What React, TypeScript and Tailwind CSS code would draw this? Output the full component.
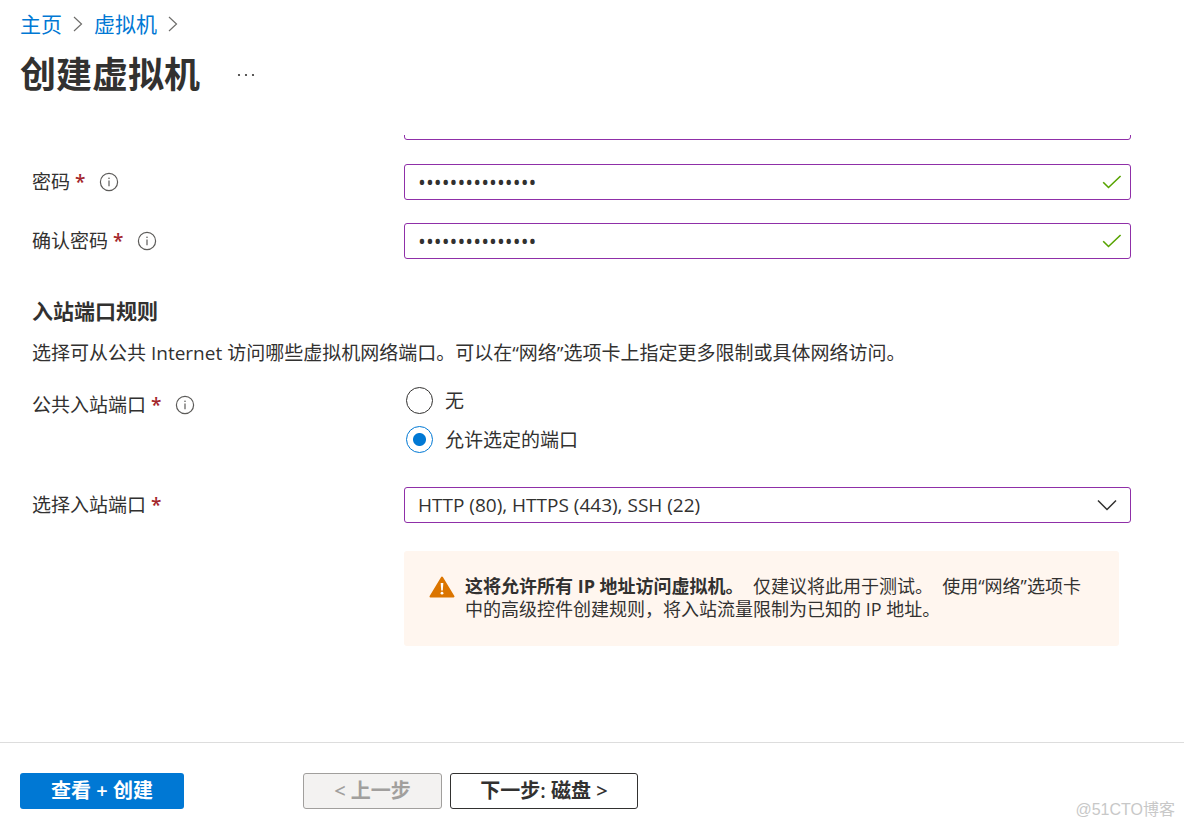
import { useState } from 'react';
import type { ReactNode } from 'react';

const fieldBorder = 'border border-[#8f2fa8] rounded-[3px]';

function InfoIcon() {
  return (
    <svg viewBox="0 0 20 20" className="h-5 w-5" fill="none" stroke="#5c5b59" aria-hidden="true">
      <circle cx="10" cy="10" r="8.6" strokeWidth="1.2" />
      <path d="M10 8.5v5.7" strokeWidth="1.2" />
      <circle cx="10" cy="6.2" r="0.8" fill="#5c5b59" stroke="none" />
    </svg>
  );
}

function BreadcrumbArrow() {
  return (
    <svg viewBox="0 0 10 16" className="h-4 w-2.5" fill="none" stroke="#6e6d6b" strokeWidth="1.2" aria-hidden="true">
      <path d="M1 1l7.5 7L1 15" />
    </svg>
  );
}

interface FieldLabelProps {
  htmlFor?: string;
  id?: string;
  text: string;
  info?: boolean;
}

function FieldLabel({ htmlFor, id, text, info }: FieldLabelProps) {
  return (
    <div className="flex h-9 w-[372px] shrink-0 items-center">
      <label id={id} htmlFor={htmlFor}>
        {text} <span className="font-semibold text-[#a4262c]">*</span>
      </label>
      {info && (
        <button type="button" aria-label={`${text} 信息`} className="ml-3.5">
          <InfoIcon />
        </button>
      )}
    </div>
  );
}

interface PasswordRowProps {
  id: string;
  label: string;
  value: string;
  onChange: (value: string) => void;
}

function PasswordRow({ id, label, value, onChange }: PasswordRowProps) {
  return (
    <div className="flex">
      <FieldLabel htmlFor={id} text={label} info />
      <div className={`flex h-9 min-w-0 flex-1 items-center pr-2 pl-[13px] ${fieldBorder}`}>
        <input
          id={id}
          type="password"
          value={value}
          onChange={(e) => onChange(e.target.value)}
          className="min-w-0 flex-1 text-[21px] leading-7 outline-none"
        />
        <svg viewBox="0 0 20 14" className="h-3.5 w-5" fill="none" stroke="#57a300" strokeWidth="1.6" aria-hidden="true">
          <path d="M1.2 7.2l5.3 5.3L18.6 1" />
        </svg>
      </div>
    </div>
  );
}

interface RadioProps {
  checked: boolean;
  onSelect: () => void;
  children: ReactNode;
}

function Radio({ checked, onSelect, children }: RadioProps) {
  return (
    <label className="flex h-[39px] items-center gap-3">
      <input
        type="radio"
        name="publicPorts"
        checked={checked}
        onChange={onSelect}
        className="h-[27px] w-[27px] appearance-none rounded-full border border-[#323130] bg-white checked:border-[#0078d4] checked:bg-[radial-gradient(circle,#0078d4_6px,#fff_7px)]"
      />
      {children}
    </label>
  );
}

export default function App() {
  const [userName, setUserName] = useState('');
  const [password, setPassword] = useState('Passw0rd1234567');
  const [confirm, setConfirm] = useState('Passw0rd1234567');
  const [publicPorts, setPublicPorts] = useState('selected');

  return (
    <div className="relative flex min-h-screen flex-col bg-white font-['Open_Sans','Noto_Sans_CJK_SC',sans-serif] text-[19px] leading-6 text-[#323130]">
      <header className="px-5 pt-2.5">
        <nav className="flex items-center gap-[11px] text-[21px] leading-7 text-[#0078d4]">
          <a href="#home">主页</a>
          <BreadcrumbArrow />
          <a href="#vm">虚拟机</a>
          <BreadcrumbArrow />
        </nav>
        <div className="mt-[13px] flex items-center gap-9">
          <h1 className="text-4xl leading-12 font-bold">创建虚拟机</h1>
          <button type="button" aria-label="更多">
            <svg viewBox="0 0 20 4" className="h-1 w-5" fill="#323130" aria-hidden="true">
              <circle cx="3" cy="2" r="1.1" />
              <circle cx="10" cy="2" r="1.1" />
              <circle cx="17" cy="2" r="1.1" />
            </svg>
          </button>
        </div>
      </header>

      <main className="mt-9 flex-1 overflow-hidden pr-[53px] pl-8">
        {/* scrolled up, only the lower edge of this field stays in view */}
        <div className="-mt-[31px] flex pl-[372px]">
          <input
            type="text"
            aria-label="用户名"
            value={userName}
            onChange={(e) => setUserName(e.target.value)}
            className={`h-9 min-w-0 flex-1 px-[13px] outline-none ${fieldBorder}`}
          />
        </div>
        <div className="mt-6 flex flex-col gap-[23px]">
          <PasswordRow id="password" label="密码" value={password} onChange={setPassword} />
          <PasswordRow id="confirm" label="确认密码" value={confirm} onChange={setConfirm} />
        </div>

        <h2 className="mt-[38px] text-[21px] leading-7 font-bold">入站端口规则</h2>
        <p className="mt-4">
          选择可从公共 Internet 访问哪些虚拟机网络端口。可以在“网络”选项卡上指定更多限制或具体网络访问。
        </p>

        <div className="mt-4 flex items-start">
          <div className="pt-1.5">
            <FieldLabel id="publicPortsLabel" text="公共入站端口" info />
          </div>
          <div role="radiogroup" aria-labelledby="publicPortsLabel" className="pl-0.5">
            <Radio checked={publicPorts === 'none'} onSelect={() => setPublicPorts('none')}>
              无
            </Radio>
            <Radio checked={publicPorts === 'selected'} onSelect={() => setPublicPorts('selected')}>
              允许选定的端口
            </Radio>
          </div>
        </div>

        <div className="mt-7 flex">
          <FieldLabel htmlFor="ports" text="选择入站端口" />
          <div className="relative min-w-0 flex-1">
            <select id="ports" className={`h-9 w-full appearance-none bg-white px-[13px] outline-none ${fieldBorder}`}>
              <option>HTTP (80), HTTPS (443), SSH (22)</option>
            </select>
            <svg
              viewBox="0 0 20 12"
              className="pointer-events-none absolute top-3 right-3.5 h-3 w-5"
              fill="none"
              stroke="#323130"
              strokeWidth="1.5"
              aria-hidden="true"
            >
              <path d="M1 1.5l9 9 9-9" />
            </svg>
          </div>
        </div>

        <div className="mt-7 mr-3 ml-[372px] flex min-h-[95px] gap-2.5 rounded-[3px] bg-[#fff6ef] px-[25px] py-6 text-lg leading-[23px]">
          <svg viewBox="0 0 26 22" className="mt-px h-[22px] w-[26px] shrink-0" aria-hidden="true">
            <path d="M13 1.5L24.5 20.5H1.5z" fill="#db7500" stroke="#db7500" strokeWidth="2" strokeLinejoin="round" />
            <path d="M11.7 7h2.6l-.5 7.5h-1.6z" fill="#fff" />
            <circle cx="13" cy="17.2" r="1.4" fill="#fff" />
          </svg>
          <p>
            <strong>这将允许所有 IP 地址访问虚拟机。</strong>&nbsp; 仅建议将此用于测试。&nbsp;
            使用“网络”选项卡中的高级控件创建规则，将入站流量限制为已知的 IP 地址。
          </p>
        </div>
      </main>

      <footer className="flex h-[86px] items-center border-t border-[#dddddd] px-5 pt-2.5 text-xl font-semibold">
        <button type="button" className="h-9 w-[164px] rounded-[3px] bg-[#0078d4] text-white">
          查看 + 创建
        </button>
        <button
          type="button"
          disabled
          className="ml-[119px] h-9 w-[139px] rounded-[3px] border border-[#a19f9d] bg-[#f3f2f1] text-[#a19f9d]"
        >
          &lt; 上一步
        </button>
        <button type="button" className="ml-2 h-9 w-[188px] rounded-[3px] border border-[#323130] bg-white">
          下一步: 磁盘 &gt;
        </button>
      </footer>
      <span className="absolute right-[9px] bottom-1.5 font-['Liberation_Sans','Noto_Sans_CJK_SC',sans-serif] text-base text-[#c8c8c8]">
        @51CTO博客
      </span>
    </div>
  );
}
